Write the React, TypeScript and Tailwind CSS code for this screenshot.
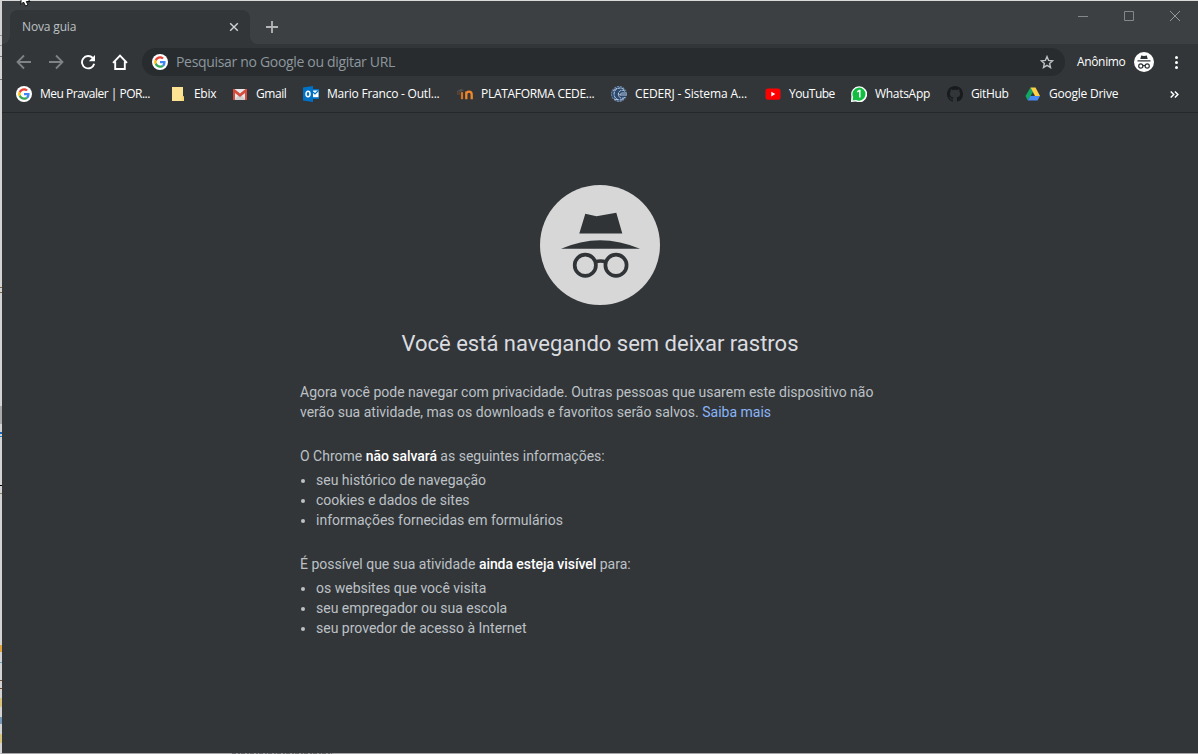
import React from "react";

const ui = "font-['Open_Sans','Noto_Sans',sans-serif]";

function GoogleIcon() {
  return (
    <svg width="16" height="16" viewBox="0 0 16 16" className="shrink-0">
      <circle cx="8" cy="8" r="8" fill="#fff" />
      <g transform="translate(2.2 2.2) scale(.242)">
        <path fill="#EA4335" d="M24 9.5c3.54 0 6.71 1.22 9.21 3.6l6.85-6.85C35.9 2.38 30.47 0 24 0 14.62 0 6.51 5.38 2.56 13.22l7.98 6.19C12.43 13.72 17.74 9.5 24 9.5z" />
        <path fill="#4285F4" d="M46.98 24.55c0-1.57-.15-3.09-.38-4.55H24v9.02h12.94c-.58 2.96-2.26 5.48-4.78 7.18l7.73 6c4.51-4.18 7.09-10.36 7.09-17.65z" />
        <path fill="#FBBC05" d="M10.53 28.59c-.48-1.45-.76-2.99-.76-4.59s.27-3.14.76-4.59l-7.98-6.19C.92 16.46 0 20.12 0 24c0 3.88.92 7.54 2.56 10.78l7.97-6.19z" />
        <path fill="#34A853" d="M24 48c6.48 0 11.93-2.13 15.89-5.81l-7.73-6c-2.15 1.45-4.92 2.3-8.16 2.3-6.26 0-11.57-4.22-13.47-9.91l-7.98 6.19C6.51 42.62 14.62 48 24 48z" />
      </g>
    </svg>
  );
}

function FolderIcon() {
  return (
    <svg width="16" height="16" viewBox="0 0 16 16" className="shrink-0">
      <path d="M2 1h11v9.500h1V15H2z" fill="#fde293" />
      <path d="M11.500 10.500h2.500V15h-2.500z" fill="#fbd774" />
    </svg>
  );
}

function GmailIcon() {
  return (
    <svg width="16" height="16" viewBox="0 0 16 16" className="shrink-0">
      <path d="M1.500 3h13v11h-13z" fill="#e8e8e8" />
      <path d="M2 14l5-5h2l5 5z" fill="#cfcfcf" />
      <path d="M1 14V3.800L8 9l7-5.200V14h-2V7L8 11 3 7v7z" fill="#d54b3d" />
      <path d="M1 3h1.500L8 7.400 13.500 3H15v1.600L8 10 1 4.600z" fill="#d54b3d" />
    </svg>
  );
}

function OutlookIcon() {
  return (
    <svg width="16" height="16" viewBox="0 0 16 16" className="shrink-0">
      <path d="M0 1.500L10 0v16L0 14.500z" fill="#0072c6" />
      <path d="M10 3h6v10h-6z" fill="#0072c6" />
      <path d="M10 4.500h5.500v6.700H10z" fill="#fff" />
      <path d="M10 6l2 2 3.500-3.500" fill="none" stroke="#0072c6" strokeWidth="1.200" />
      <ellipse cx="5" cy="8" rx="2" ry="2.700" fill="none" stroke="#fff" strokeWidth="1.500" />
    </svg>
  );
}

function MoodleIcon() {
  return (
    <svg width="16" height="16" viewBox="0 0 16 16" className="shrink-0">
      <path d="M0 5l4-2 3 1-3 2z" fill="#55504d" />
      <path d="M.8 5v4" stroke="#625047" strokeWidth="1" />
      <path d="M2.500 8.500V6.500" stroke="#704421" strokeWidth="1.500" />
      <path d="M5 13.200V6.200" stroke="#d87525" strokeWidth="2.200" />
      <path d="M9.300 13.200V5.500M9.300 8.400a2.700 2.700 0 0 1 5.400 0v4.800" fill="none" stroke="#f0872a" strokeWidth="2.300" />
    </svg>
  );
}

function CederjIcon() {
  return (
    <svg width="16" height="16" viewBox="0 0 16 16" fill="none" className="shrink-0">
      <circle cx="8" cy="8" r="7.500" fill="#2b486f" stroke="#7f9abc" strokeWidth="1" strokeDasharray="2 1" />
      <path d="M13 3.500A6 6 0 1 0 13 12.500M14 5.300A4 4 0 1 0 14 11.200" stroke="#c3d2e4" strokeWidth="1" strokeDasharray="3 .7" />
      <path d="M15 7h-4.500l-2 2H15M2 5l4-3M3 13l4 1" stroke="#d4e0ee" strokeWidth=".8" />
    </svg>
  );
}

function YoutubeIcon() {
  return (
    <svg width="16" height="16" viewBox="0 0 16 16" className="shrink-0">
      <rect x=".5" y="2.500" width="15" height="11.300" rx="2.500" fill="#f00" />
      <path d="M6.300 5.800v4.600l4-2.300z" fill="#fff" />
    </svg>
  );
}

function WhatsappIcon() {
  return (
    <svg width="16" height="16" viewBox="0 0 16 16" className="shrink-0">
      <path d="M0 16l.4-6A8 8 0 1 1 5 15.600z" fill="#fff" />
      <path d="M1.600 14.400l.5-3.500a6.500 6.500 0 1 1 2.900 3z" fill="#12bd42" />
      <path d="M6.300 6l1.900-1.500h.6v7" fill="none" stroke="#fff" strokeWidth="1.500" />
    </svg>
  );
}

function GithubIcon() {
  return (
    <svg width="16" height="16" viewBox="0 0 16 16" className="shrink-0">
      <path fill="#181a1c" d="M8 0C3.580 0 0 3.580 0 8c0 3.540 2.290 6.530 5.470 7.590.4.070.55-.17.55-.38 0-.19-.01-.82-.01-1.490-2.010.37-2.530-.49-2.690-.94-.09-.23-.48-.94-.82-1.130-.28-.15-.68-.52-.01-.53.63-.01 1.080.58 1.230.82.72 1.210 1.870.87 2.330.66.07-.52.28-.87.51-1.070-1.780-.2-3.640-.89-3.640-3.950 0-.87.31-1.590.82-2.150-.08-.2-.36-1.020.08-2.120 0 0 .67-.21 2.200.82.64-.18 1.320-.27 2-.27s1.360.09 2 .27c1.530-1.040 2.200-.82 2.200-.82.44 1.100.16 1.920.08 2.120.51.56.82 1.270.82 2.150 0 3.070-1.870 3.750-3.650 3.950.29.25.54.73.54 1.480 0 1.070-.01 1.930-.01 2.200 0 .21.15.46.55.38A8.010 8.010 0 0 0 16 8c0-4.420-3.580-8-8-8z" />
    </svg>
  );
}

function DriveIcon() {
  return (
    <svg width="16" height="16" viewBox="0 0 16 16" className="shrink-0">
      <path d="M5.500 1.500L.5 10l2.300 4.500L8 6z" fill="#11a861" />
      <path d="M5.500 1.500h5L15 10h-5z" fill="#ffcf48" />
      <path d="M5.300 10H15l-2.500 4.500H2.800z" fill="#4688f4" />
    </svg>
  );
}

function Incognito({ size, disc }: { size: number; disc: string }) {
  return (
    <svg width={size} height={size} viewBox="0 0 120 120" className="shrink-0">
      <circle cx="60" cy="60" r="60" fill={disc} />
      <g fill="#303437">
        <path d="M45.300 28.700L56.500 31.200 76.300 27.800 82.300 48.600H39.300z" />
        <path d="M21 63.800Q60 46.500 100 63.800z" />
      </g>
      <g fill="none" stroke="#303437" strokeWidth="3.700">
        <circle cx="45.300" cy="80.300" r="10.600" />
        <circle cx="76" cy="80.300" r="10.600" />
        <path d="M55 77q5.500-2 11 0" />
      </g>
    </svg>
  );
}

function SmallIncognito() {
  return (
    <svg width="20" height="20" viewBox="0 0 20 20" className="shrink-0">
      <circle cx="10" cy="10" r="10" fill="#fff" />
      <path d="M7.200 3.500l2.800.6 2.800-.6.900 3.500H6.300zM3.500 8.200h13v1.300h-13z" fill="#303437" />
      <g fill="none" stroke="#303437" strokeWidth="1.200">
        <circle cx="6.800" cy="14" r="2.100" />
        <circle cx="13.200" cy="14" r="2.100" />
        <path d="M8.700 13.600h2.600" />
      </g>
    </svg>
  );
}

const bookmarks = [
  { label: "Meu Pravaler | POR...", icon: <GoogleIcon />, width: "w-[154px]", track: "tracking-[-0.5px]" },
  { label: "Ebix", icon: <FolderIcon />, width: "w-[62px]", track: "tracking-[-0.3px]" },
  { label: "Gmail", icon: <GmailIcon />, width: "w-[71px]", track: "tracking-[-0.45px]" },
  { label: "Mario Franco - Outl...", icon: <OutlookIcon />, width: "w-[154px]", track: "tracking-[-0.22px]" },
  { label: "PLATAFORMA CEDE...", icon: <MoodleIcon />, width: "w-[154px]", track: "tracking-[-0.3px]" },
  { label: "CEDERJ - Sistema A...", icon: <CederjIcon />, width: "w-[154px]", track: "tracking-[-0.12px]" },
  { label: "YouTube", icon: <YoutubeIcon />, width: "w-[86px]", track: "tracking-[-0.5px]" },
  { label: "WhatsApp", icon: <WhatsappIcon />, width: "w-[96px]", track: "tracking-[-0.3px]" },
  { label: "GitHub", icon: <GithubIcon />, width: "w-[78px]", track: "tracking-[-0.35px]" },
  { label: "Google Drive", icon: <DriveIcon />, width: "w-[100px]", track: "tracking-[-0.23px]" },
];

function TabStrip() {
  return (
    <header className="flex h-[43px] shrink-0 items-start bg-[#3c4043]">
      <svg width="8" height="34" viewBox="0 0 8 34" className="mt-[9px] shrink-0">
        <path d="M8 26a8 8 0 0 1-8 8h8z" fill="#323639" />
      </svg>
      <div className="mt-[9px] flex h-[34px] w-60 shrink-0 items-center justify-between rounded-t-lg bg-[#323639] pr-[11px] pl-3">
        <span className="text-xs tracking-[-0.15px] whitespace-nowrap text-[#bdc1c6]">Nova guia</span>
        <svg width="10" height="10" viewBox="0 0 10 10" stroke="#d0d2d4" strokeWidth="1.400">
          <path d="M1.200 1.200l7.600 7.600M8.800 1.200L1.200 8.800" />
        </svg>
      </div>
      <svg width="8" height="34" viewBox="0 0 8 34" className="mt-[9px] shrink-0">
        <path d="M0 26a8 8 0 0 0 8 8H0z" fill="#323639" />
      </svg>
      <svg width="12" height="12" viewBox="0 0 12 12" className="mt-5 ml-2 shrink-0" stroke="#b4b6b8" strokeWidth="1.800">
        <path d="M6 0v12M0 6h12" />
      </svg>
      <div className="mt-[10px] ml-auto flex gap-9 pr-[18px]">
        <svg width="10" height="10" viewBox="0 0 10 10" stroke="#85888a"><path d="M0 5.500h10" /></svg>
        <svg width="10" height="10" viewBox="0 0 10 10" fill="none" stroke="#85888a"><path d="M.5.500h9v9h-9z" /></svg>
        <svg width="10" height="10" viewBox="0 0 10 10" stroke="#96999b"><path d="M0 0l10 10M10 0L0 10" /></svg>
      </div>
    </header>
  );
}

function Toolbar() {
  return (
    <nav className="flex h-9 shrink-0 items-center pr-[14px] pl-[14px]">
      <div className="flex w-[126px] shrink-0 gap-4">
        <svg width="16" height="16" viewBox="0 0 16 16" fill="none" stroke="#808386" strokeWidth="1.800">
          <path d="M15 8H2M8 1.500L1.500 8 8 14.500" />
        </svg>
        <svg width="16" height="16" viewBox="0 0 16 16" fill="none" stroke="#808386" strokeWidth="1.800">
          <path d="M1 8h13M8 1.500L14.500 8 8 14.500" />
        </svg>
        <svg width="16" height="16" viewBox="0 0 16 16" fill="none">
          <path d="M12.800 4A6.200 6.200 0 1 0 14.200 9.800" stroke="#fff" strokeWidth="1.900" />
          <path d="M15 1v6.200H8.800z" fill="#fff" />
        </svg>
        <svg width="16" height="16" viewBox="0 0 16 16" fill="none" stroke="#fff" strokeWidth="1.900">
          <path d="M1 8.800L8 1.500l7 7.300M3.200 7.500V15h9.600V7.500" />
        </svg>
      </div>
      <div className="flex h-7 w-[923px] shrink-0 items-center rounded-full bg-[#282c2f] pr-[11px] pl-[10px]">
        <GoogleIcon />
        <span className="mb-0.5 ml-2 text-[14px] tracking-[-0.32px] whitespace-nowrap text-[#8d979e]">Pesquisar no Google ou digitar URL</span>
        <svg width="14" height="14" viewBox="0 0 14 14" className="ml-auto" fill="none" stroke="#bdc1c6" strokeWidth="1.400">
          <path d="M7 1.600l1.600 3.800 4.100.35-3.100 2.700.93 4L7 10.300l-3.530 2.150.93-4-3.100-2.700 4.100-.35z" />
        </svg>
      </div>
      <span className="ml-3 w-[57px] shrink-0 text-xs tracking-[-0.35px] whitespace-nowrap text-white">Anônimo</span>
      <SmallIncognito />
      <svg width="4" height="14" viewBox="0 0 4 14" className="ml-5 shrink-0" fill="#fff">
        <circle cx="2.500" cy="2.500" r="1.500" /><circle cx="2.500" cy="7.500" r="1.500" /><circle cx="2.500" cy="12.500" r="1.500" />
      </svg>
    </nav>
  );
}

function Bookmarks() {
  return (
    <div className="flex h-[33px] shrink-0 items-start border-b border-[#25282b] pt-[6px] pl-[14px]">
      {bookmarks.map((b) => (
        <div key={b.label} className={`flex h-4 shrink-0 items-center gap-2 ${b.width}`}>
          {b.icon}
          <span className={`text-xs leading-4 whitespace-nowrap text-white ${b.track}`}>{b.label}</span>
        </div>
      ))}
      <svg width="9" height="7" viewBox="0 0 9 7" className="mt-[5px] mr-[19px] ml-auto shrink-0" fill="none" stroke="#fff" strokeWidth="1.500">
        <path d="M.7.500l3 3-3 3M4.900.500l3 3-3 3" />
      </svg>
    </div>
  );
}

function Items({ items }: { items: string[] }) {
  return (
    <ul className="mt-1">
      {items.map((t) => (
        <li key={t} className="flex h-5 items-center">
          <span className="mt-0.5 mr-[11px] ml-px size-1 shrink-0 rounded-full bg-[#bdc1c6]" />
          {t}
        </li>
      ))}
    </ul>
  );
}

const edgeMarks = [
  { top: 35, height: 1, color: "bg-[#999999]" },
  { top: 45, height: 1, color: "bg-[#999999]" },
  { top: 56, height: 1, color: "bg-[#777777]" },
  { top: 79, height: 1, color: "bg-[#777777]" },
  { top: 287, height: 1, color: "bg-[#806744]" },
  { top: 292, height: 1, color: "bg-[#806744]" },
  { top: 406, height: 18, color: "bg-[#aaaaaa]" },
  { top: 432, height: 2, color: "bg-[#1767bb]" },
  { top: 436, height: 1, color: "bg-[#2485c9]" },
  { top: 485, height: 1, color: "bg-black" },
  { top: 493, height: 1, color: "bg-[#8a835b]" },
  { top: 645, height: 7, color: "bg-[#e2a441]" },
  { top: 662, height: 1, color: "bg-[#6ba4c9]" },
  { top: 680, height: 1, color: "bg-[#74502c]" },
  { top: 688, height: 1, color: "bg-[#74502c]" },
  { top: 698, height: 9, color: "bg-[#d8c47d]" },
  { top: 717, height: 7, color: "bg-[#7798b9]" },
  { top: 734, height: 9, color: "bg-[#d8c47d]" },
];

export default function App() {
  return (
    <div className={`relative flex h-[754px] w-[1198px] flex-col border-t border-b border-l-2 border-t-[#dadbd9] border-b-[#a4a5a5] border-l-[#d2d3d2] bg-[#323639] ${ui}`}>
      <TabStrip />
      <Toolbar />
      <Bookmarks />
      <main className="flex grow flex-col items-center pt-[72px] font-['Roboto',sans-serif] text-sm leading-5 text-[#bdc1c6]">
        <Incognito size={120} disc="#d7d7d7" />
        <h1 className="mt-[25px] text-[22px] leading-7 whitespace-nowrap text-[#dadce0]">Você está navegando sem deixar rastros</h1>
        <div className="mt-[24px] w-[600px]">
          <p className="whitespace-nowrap">
            Agora você pode navegar com privacidade. Outras pessoas que usarem este dispositivo não<br />
            verão sua atividade, mas os downloads e favoritos serão salvos. <a className="text-[#8ab4f8]">Saiba mais</a>
          </p>
          <section className="mt-6">
            <p>O Chrome <b className="font-medium tracking-[-0.05px] text-white">não salvará</b> as seguintes informações:</p>
            <Items items={["seu histórico de navegação", "cookies e dados de sites", "informações fornecidas em formulários"]} />
          </section>
          <section className="mt-6">
            <p>É possível que sua atividade <b className="font-medium tracking-[-0.06px] text-white">ainda esteja visível</b> para:</p>
            <Items items={["os websites que você visita", "seu empregador ou sua escola", "seu provedor de acesso à Internet"]} />
          </section>
        </div>
      </main>
      {edgeMarks.map((m) => (
        <i key={m.top} className={`absolute -left-[2px] w-[2px] ${m.color}`} style={{ top: m.top - 1, height: m.height }} />
      ))}
      <svg width="13" height="7" viewBox="0 0 13 7" className="absolute -top-px left-[18px] z-10">
        <path d="M1-4v8.500L3.500 2 5.500 6 8 5 6.300 1.500H10L5-4z" fill="#fff" stroke="#111" strokeWidth="1" />
      </svg>
      <svg width="100" height="1" viewBox="0 0 100 1" className="absolute -bottom-px left-[230px]">
        <path d="M0 .5h100" stroke="#6f7172" strokeDasharray="4 2 2 1" />
      </svg>
    </div>
  );
}
